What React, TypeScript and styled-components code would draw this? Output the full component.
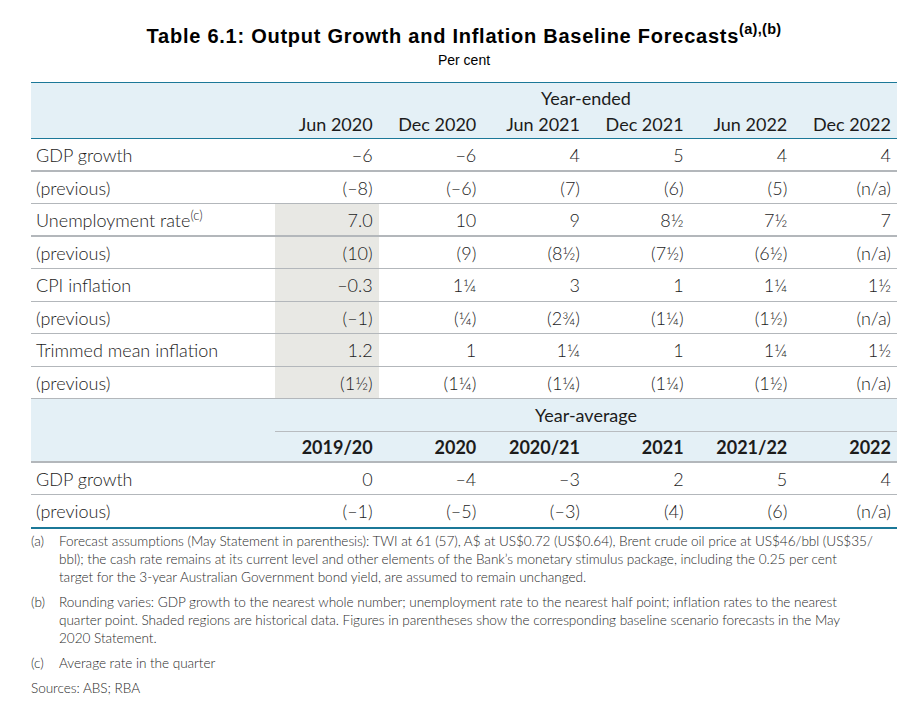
import styled, { createGlobalStyle } from "styled-components";

const GlobalStyle = createGlobalStyle`
  body {
    margin: 0;
    background: #ffffff;
    color: #1c1c1c;
    font-family: Lato, "Open Sans", sans-serif;
  }
`;

const Page = styled.div`
  width: 916px;
  padding: 22px 0 0 31px;
  box-sizing: border-box;
`;

const Heading = styled.div`
  width: 866px;
  text-align: center;
  font-family: "Liberation Sans", Arial, sans-serif;
  color: #000;
`;

const Title = styled.h1`
  margin: 0;
  font-size: 20px;
  font-weight: bold;
  line-height: 28px;
  letter-spacing: 0.75px;
`;

const TitleSup = styled.sup`
  font-size: 14.5px;
  letter-spacing: 0.3px;
  line-height: 0;
  vertical-align: 9px;
`;

const Subtitle = styled.div`
  font-size: 14px;
  line-height: 20px;
  margin-bottom: 12px;
`;

const Table = styled.table`
  width: 866px;
  table-layout: fixed;
  border-collapse: separate;
  border-spacing: 0;
  font-size: 18px;
  font-weight: 300;
  border-top: 1px solid #1b7898;
  border-bottom: 2px solid #1b7898;
`;

const HeadRow = styled.tr`
  background: #e4f0f6;
`;

const GroupCell = styled.th<{ $underline?: boolean }>`
  height: ${(p) => (p.$underline ? "32px" : "26px")};
  padding: 0;
  text-align: center;
  font-weight: 400;
  vertical-align: ${(p) => (p.$underline ? "middle" : "bottom")};
  border-bottom: ${(p) => (p.$underline ? "1px solid #b8bcc0" : "none")};
`;

const BlankHead = styled.th`
  padding: 0;
`;

const ColHead = styled.th<{ $bold?: boolean; $rule: "teal" | "gray" }>`
  height: 29px;
  padding: 0 6px 0 0;
  text-align: right;
  font-weight: ${(p) => (p.$bold ? 700 : 400)};
  vertical-align: middle;
  border-bottom: ${(p) =>
    p.$rule === "teal" ? "1px solid #1b7898" : "2px solid #b3b7bb"};
`;

const LabelHeadCell = styled.th<{ $rule: "teal" | "gray" }>`
  padding: 0;
  border-bottom: ${(p) =>
    p.$rule === "teal" ? "1px solid #1b7898" : "2px solid #b3b7bb"};
`;

const Label = styled.td<{ $h: number; $rule: number }>`
  height: ${(p) => p.$h}px;
  box-sizing: border-box;
  padding: 0 0 0 5px;
  text-align: left;
  vertical-align: middle;
  white-space: nowrap;
  border-bottom: ${(p) => (p.$rule ? `${p.$rule}px solid #b3b7bb` : "none")};
`;

const Value = styled.td<{ $h: number; $rule: number; $shaded?: boolean }>`
  height: ${(p) => p.$h}px;
  box-sizing: border-box;
  padding: 0 6px 0 0;
  text-align: right;
  vertical-align: middle;
  white-space: nowrap;
  background: ${(p) => (p.$shaded ? "#e8e8e4" : "transparent")};
  border-bottom: ${(p) => (p.$rule ? `${p.$rule}px solid #b3b7bb` : "none")};
`;

const LabelSup = styled.sup`
  font-size: 13px;
  line-height: 0;
  vertical-align: 7px;
`;

const Notes = styled.div`
  width: 866px;
  padding-top: 3px;
  font-size: 13.6px;
  font-weight: 300;
  line-height: 18px;
  letter-spacing: -0.05px;
  color: #2a2a2a;
`;

const Note = styled.div`
  display: grid;
  grid-template-columns: 28px 1fr;
  margin-bottom: 7px;
`;

const NoteKey = styled.span``;

const NoteText = styled.span``;

const Sources = styled.div`
  margin-top: 3px;
`;

type Row = {
  label: string;
  sup?: string;
  values: string[];
  shadeFirst?: boolean;
  rule: number;
  h: number;
};

const yearEnded: Row[] = [
  { label: "GDP growth", values: ["−6", "−6", "4", "5", "4", "4"], rule: 2, h: 33 },
  { label: "(previous)", values: ["(–8)", "(–6)", "(7)", "(6)", "(5)", "(n/a)"], rule: 1, h: 32 },
  { label: "Unemployment rate", sup: "(c)", values: ["7.0", "10", "9", "8½", "7½", "7"], shadeFirst: true, rule: 2, h: 33 },
  { label: "(previous)", values: ["(10)", "(9)", "(8½)", "(7½)", "(6½)", "(n/a)"], shadeFirst: true, rule: 1, h: 32 },
  { label: "CPI inflation", values: ["–0.3", "1¼", "3", "1", "1¼", "1½"], shadeFirst: true, rule: 1, h: 33 },
  { label: "(previous)", values: ["(–1)", "(¼)", "(2¾)", "(1¼)", "(1½)", "(n/a)"], shadeFirst: true, rule: 1, h: 32 },
  { label: "Trimmed mean inflation", values: ["1.2", "1", "1¼", "1", "1¼", "1½"], shadeFirst: true, rule: 1, h: 33 },
  { label: "(previous)", values: ["(1½)", "(1¼)", "(1¼)", "(1¼)", "(1½)", "(n/a)"], shadeFirst: true, rule: 1, h: 32 },
];

const yearAverage: Row[] = [
  { label: "GDP growth", values: ["0", "–4", "–3", "2", "5", "4"], rule: 1, h: 32 },
  { label: "(previous)", values: ["(–1)", "(–5)", "(–3)", "(4)", "(6)", "(n/a)"], rule: 0, h: 32 },
];

const endedCols = ["Jun 2020", "Dec 2020", "Jun 2021", "Dec 2021", "Jun 2022", "Dec 2022"];
const averageCols = ["2019/20", "2020", "2020/21", "2021", "2021/22", "2022"];

function DataRows({ rows }: { rows: Row[] }) {
  return (
    <>
      {rows.map((r, i) => (
        <tr key={i}>
          <Label $h={r.h} $rule={r.rule}>
            {r.label}
            {r.sup && <LabelSup>{r.sup}</LabelSup>}
          </Label>
          {r.values.map((v, j) => (
            <Value key={j} $h={r.h} $rule={r.rule} $shaded={j === 0 && r.shadeFirst}>
              {v}
            </Value>
          ))}
        </tr>
      ))}
    </>
  );
}

export default function App() {
  return (
    <>
      <GlobalStyle />
      <Page>
        <Heading>
          <Title>
            Table 6.1: Output Growth and Inflation Baseline Forecasts
            <TitleSup>(a),(b)</TitleSup>
          </Title>
          <Subtitle>Per cent</Subtitle>
        </Heading>
        <Table>
          <colgroup>
            <col style={{ width: "244px" }} />
            {endedCols.map((c) => (
              <col key={c} />
            ))}
          </colgroup>
          <thead>
            <HeadRow>
              <BlankHead />
              <GroupCell colSpan={6}>Year-ended</GroupCell>
            </HeadRow>
            <HeadRow>
              <LabelHeadCell $rule="teal" />
              {endedCols.map((c) => (
                <ColHead key={c} $rule="teal">
                  {c}
                </ColHead>
              ))}
            </HeadRow>
          </thead>
          <tbody>
            <DataRows rows={yearEnded} />
            <HeadRow>
              <BlankHead />
              <GroupCell colSpan={6} $underline>
                Year-average
              </GroupCell>
            </HeadRow>
            <HeadRow>
              <LabelHeadCell $rule="gray" />
              {averageCols.map((c) => (
                <ColHead key={c} $bold $rule="gray">
                  {c}
                </ColHead>
              ))}
            </HeadRow>
            <DataRows rows={yearAverage} />
          </tbody>
        </Table>
        <Notes>
          <Note>
            <NoteKey>(a)</NoteKey>
            <NoteText>
              Forecast assumptions (May Statement in parenthesis): TWI at 61 (57), A$ at US$0.72 (US$0.64), Brent crude oil price at US$46/bbl (US$35/
              <br />
              bbl); the cash rate remains at its current level and other elements of the Bank’s monetary stimulus package, including the 0.25 per cent
              <br />
              target for the 3-year Australian Government bond yield, are assumed to remain unchanged.
            </NoteText>
          </Note>
          <Note>
            <NoteKey>(b)</NoteKey>
            <NoteText>
              Rounding varies: GDP growth to the nearest whole number; unemployment rate to the nearest half point; inflation rates to the nearest
              <br />
              quarter point. Shaded regions are historical data. Figures in parentheses show the corresponding baseline scenario forecasts in the May
              <br />
              2020 Statement.
            </NoteText>
          </Note>
          <Note>
            <NoteKey>(c)</NoteKey>
            <NoteText>Average rate in the quarter</NoteText>
          </Note>
          <Sources>Sources: ABS; RBA</Sources>
        </Notes>
      </Page>
    </>
  );
}
